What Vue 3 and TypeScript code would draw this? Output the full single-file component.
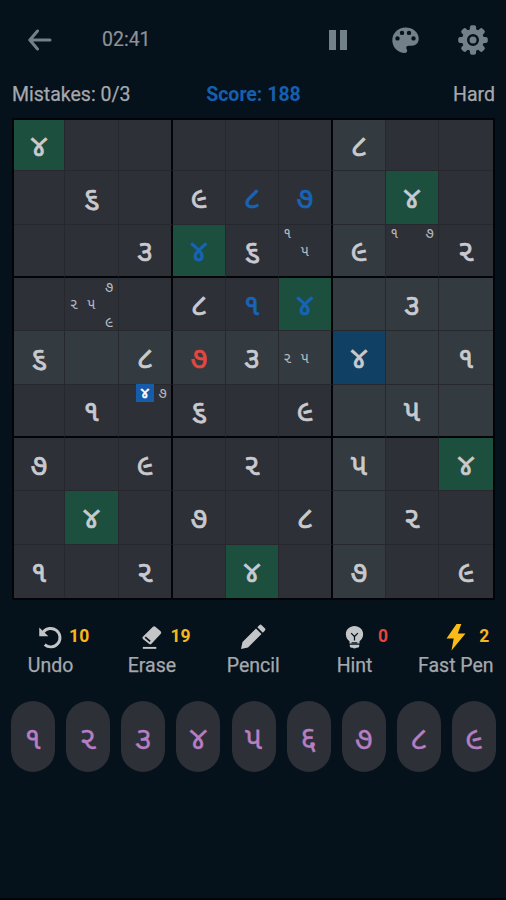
<script setup lang="ts">
import { computed } from 'vue'

type Kind = 'given' | 'entered' | 'wrong'
interface Note { slot: number; value: number; active?: boolean }
interface Cell { key: number; value: string; kind: Kind; classes: string[]; notes: Note[] }

const digits = ['', '૧', '૨', '૩', '૪', '૫', '૬', '૭', '૮', '૯']
const keypad = ['૧', '૨', '૩', '૪', '૫', '६', '૭', '૮', '૯']
const rows = [
  '4.....8..', '.6.987.4.', '..346.9.2',
  '...814.3.', '6.873.4.1', '.1.6.9.5.',
  '7.9.2.5.4', '.4.7.8.2.', '1.2.4.7.9',
]
const entered = new Set([13, 14, 21, 31, 32])
const wrong = 39
const selected = 42
const notes: Record<number, Note[]> = {
  23: [{ slot: 1, value: 1 }, { slot: 5, value: 5 }],
  25: [{ slot: 1, value: 1 }, { slot: 3, value: 7 }],
  28: [{ slot: 3, value: 7 }, { slot: 4, value: 2 }, { slot: 5, value: 5 }, { slot: 9, value: 9 }],
  41: [{ slot: 4, value: 2 }, { slot: 5, value: 5 }],
  47: [{ slot: 2, value: 4, active: true }, { slot: 3, value: 7 }],
}

const cells = computed<Cell[]>(() =>
  rows.join('').split('').map((ch, i) => {
    const r = Math.floor(i / 9)
    const c = i % 9
    const sr = Math.floor(selected / 9)
    const sc = selected % 9
    const classes: string[] = []
    if (i === selected) classes.push('selected')
    else if (ch === '4') classes.push('same')
    else if (r === sr || c === sc || (Math.floor(r / 3) === Math.floor(sr / 3) && Math.floor(c / 3) === Math.floor(sc / 3))) classes.push('related')
    if (c === 2 || c === 5) classes.push('edge-right')
    if (r === 2 || r === 5) classes.push('edge-bottom')
    if (c === 8) classes.push('last-col')
    if (r === 8) classes.push('last-row')
    const kind: Kind = i === wrong ? 'wrong' : entered.has(i) ? 'entered' : 'given'
    return { key: i, value: ch === '.' ? '' : digits[Number(ch)], kind, classes, notes: notes[i] ?? [] }
  }),
)
const noteAt = (cell: Cell, slot: number) => cell.notes.find((n) => n.slot === slot)
</script>

<template>
  <main class="screen">
    <header class="bar">
      <svg class="back" width="24" height="22" viewBox="0 0 24 22"><path d="M22 11H2M9.500 2 1.800 11 9.500 20" /></svg>
      <span class="time">02:41</span>
      <svg class="pause" width="18" height="20" viewBox="0 0 18 20"><path d="M0 0h7v20H0zM11 0h7v20h-7z" /></svg>
      <svg class="palette" width="27" height="27" viewBox="0 0 27 27"><path fill-rule="evenodd" d="M13.500 0.500C6 .5 .3 6.200 .3 13.300c0 7.100 5.700 12.700 12.600 12.700 1.500 0 2.300-1 2.300-2.200 0-1.400-1-1.700-1-3 0-1.300 1-2.100 2.500-2.100h3.200c4 0 6.800-2.900 6.800-7C26.700 5.200 20.800 .5 13.500 .5zM5.500 9.200a2.200 2.200 0 1 1 0 4.400 2.200 2.200 0 0 1 0-4.400zM10 3.700a2.200 2.200 0 1 1 0 4.400 2.200 2.200 0 0 1 0-4.400zM17 3.700a2.200 2.200 0 1 1 0 4.400 2.200 2.200 0 0 1 0-4.400zM21.500 9.200a2.200 2.200 0 1 1 0 4.400 2.200 2.200 0 0 1 0-4.400z" /></svg>
      <svg class="gear" width="30" height="30" viewBox="-15 -15 30 30">
        <g><rect v-for="n in 8" :key="n" x="-3.100" y="-14.800" width="6.200" height="8" rx="2" :transform="`rotate(${n * 45})`" /></g>
        <circle class="core" r="7" /><circle class="ring" r="8.500" /><circle r="3.500" />
      </svg>
    </header>
    <section class="status"><span>Mistakes: 0/3</span><b>Score: 188</b><span class="level">Hard</span></section>
    <section class="board">
      <div v-for="cell in cells" :key="cell.key" class="cell" :class="cell.classes">
        <span v-if="cell.value" class="digit" :class="cell.kind">{{ cell.value }}</span>
        <div v-else-if="cell.notes.length" class="notes">
          <span v-for="s in 9" :key="s" :class="{ active: noteAt(cell, s)?.active }">{{ noteAt(cell, s) ? digits[noteAt(cell, s)!.value] : '' }}</span>
        </div>
      </div>
    </section>
    <nav class="tools">
      <div class="tool undo">
        <svg width="25" height="25" viewBox="0 0 26 26"><path class="line" d="M5.500 7.500A9.600 9.600 0 1 1 7 20.500" /><path d="M1.300 2.500v9.300h9.500z" /></svg><i>10</i><span>Undo</span>
      </div>
      <div class="tool erase">
        <svg width="25" height="25" viewBox="0 0 26 26"><path fill-rule="evenodd" d="M14.500 1.800q1.200-1.200 2.500 0l5.500 4.700q1.200 1.200 .2 2.500L13 19.500q-1 1.200-2.400 .2L4 14.500q-1-1 0-2.200zM5.800 13.300l5.200 4.500 1.200-1.400-5.200-4.500z" /><path d="M4 22.800h14v2H4z" /></svg><i>19</i><span>Erase</span>
      </div>
      <div class="tool pencil">
        <svg width="28" height="28" viewBox="0 0 28 28"><path d="M2 26l1.500-7L17 5.500l5.500 5.500L9 24.500zM18.300 4.200l2-2q1.200-1.200 2.400 0l3.100 3.100q1.200 1.200 0 2.400l-2 2z" /></svg><span>Pencil</span>
      </div>
      <div class="tool hint">
        <svg width="25" height="25" viewBox="0 0 26 26"><path d="M13 1C7.800 1 4 4.800 4 9.600c0 3.500 1.800 5.500 3.800 7.400v2.300h10.400V17c2-1.900 3.800-3.900 3.800-7.400C22 4.800 18.200 1 13 1zM8 20.500h10v1.200q0 2-2 2h-1q-2 1.500-4 0h-1q-2 0-2-2z" /><path class="filament" d="M9.500 8.500 13 12l3.500-3.500M13 12v4M10 18.500h6" /></svg><i class="none">0</i><span>Hint</span>
      </div>
      <div class="tool fast">
        <svg width="24" height="28" viewBox="0 0 24 28"><path d="M12.500 1 2.500 15.500h7.200L7.500 27.500 21.500 10.500h-7.700L17.300 1z" /></svg><i>2</i><span>Fast Pen</span>
      </div>
    </nav>
    <section class="keys"><button v-for="key in keypad" :key="key">{{ key }}</button></section>
  </main>
</template>

<style>
body { margin: 0; background: #05111b; }
</style>
<style scoped>
.screen { width: 506px; height: 900px; box-sizing: border-box; padding: 20px 11px 0 12px; background: #05111b; color: #a5a9ad; font-family: Roboto, "Noto Sans Gujarati", "Noto Sans", sans-serif; border-bottom: 2px solid #01050a; overflow: hidden; }
.bar { display: flex; align-items: center; height: 40px; padding: 0 7px 0 16px; fill: #718089; }
.back { fill: none; stroke: #718089; stroke-width: 3; stroke-linecap: round; stroke-linejoin: round; }
.time { margin-left: 50px; font-size: 19.500px; color: #8d9297; width: 60px; line-height: 42px; -webkit-text-stroke: 0.200px; }
.pause { margin-left: 167px; }
.palette { margin-left: 45px; }
.gear { margin-left: 39px; flex: none; }
.core { fill: #05111b; }
.ring { fill: none; stroke: #718089; stroke-width: 5; }
.status { display: grid; grid-template-columns: 1fr auto 1fr; height: 48px; align-items: center; margin-top: 10px; font-size: 19.500px; -webkit-text-stroke: 0.250px; }
.status b { color: #155fae; font-weight: 700; -webkit-text-stroke: 0; }
.level { text-align: right; }
.board { display: grid; width: 479px; height: 478px; border: 2px solid #020407; grid-template-columns: 51px 54px 54px 53px 53px 54px 53px 53px 54px; grid-template-rows: 51px 54px 53px 53px 54px 53px 53px 54px 53px; }
.cell { display: flex; box-sizing: border-box; background: #2e3038; border-right: 1px solid #26282e; border-bottom: 1px solid #26282e; align-items: center; justify-content: center; min-width: 0; min-height: 0; }
.related { background: #333a40; }
.same { background: #1c4f3d; }
.selected { background: #104164; }
.edge-right { border-right: 2px solid #020407; }
.edge-bottom { border-bottom: 2px solid #020407; }
.last-col { border-right: 0; }
.last-row { border-bottom: 0; }
.digit { font-size: 30px; line-height: 40px; padding-top: 1px; color: #c8cacf; -webkit-text-stroke: 0.700px; }
.digit.entered { color: #1764b7; }
.digit.wrong { color: #e34840; }
.notes { display: grid; grid-template: repeat(3, 17.600px) / repeat(3, 17.600px); font-size: 15px; line-height: 19px; text-align: center; color: #b7babf; }
.notes .active { background: #155cab; color: #fff; -webkit-text-stroke: 0.600px; line-height: 18px; }
.tools { display: grid; grid-template-columns: repeat(5, 101.300px); margin: 20px 0 0 -12px; height: 62px; }
.tool { display: grid; grid-template: 34px 24px / 31px 26px 31px; justify-content: center; align-items: center; justify-items: center; fill: #c3c5c7; }
.tool svg { grid-area: 1 / 2; }
.tool span { grid-area: 2 / 1 / 3 / 4; font-size: 19.500px; line-height: 24px; white-space: nowrap; -webkit-text-stroke: 0.250px; }
.tool i { grid-area: 1 / 3; font-style: normal; font-weight: 700; font-size: 17.500px; line-height: 32px; align-self: start; color: #f6b71c; }
.tool i.none { color: #e7443d; }
.line { fill: none; stroke: #c3c5c7; stroke-width: 3; }
.filament { fill: none; stroke: #05111b; stroke-width: 1.300; }
.fast { fill: #fbbb16; }
.keys { display: flex; justify-content: space-between; margin: 19px 0 0 -1px; width: 485px; }
.keys button { width: 44px; height: 71px; border: 0; border-radius: 22px; padding: 3px 0 0; background: #2e3038; color: #b67fc4; font: 400 32px/68px Roboto, "Noto Sans Gujarati", "Noto Sans", sans-serif; -webkit-text-stroke: 0.300px; }
</style>
